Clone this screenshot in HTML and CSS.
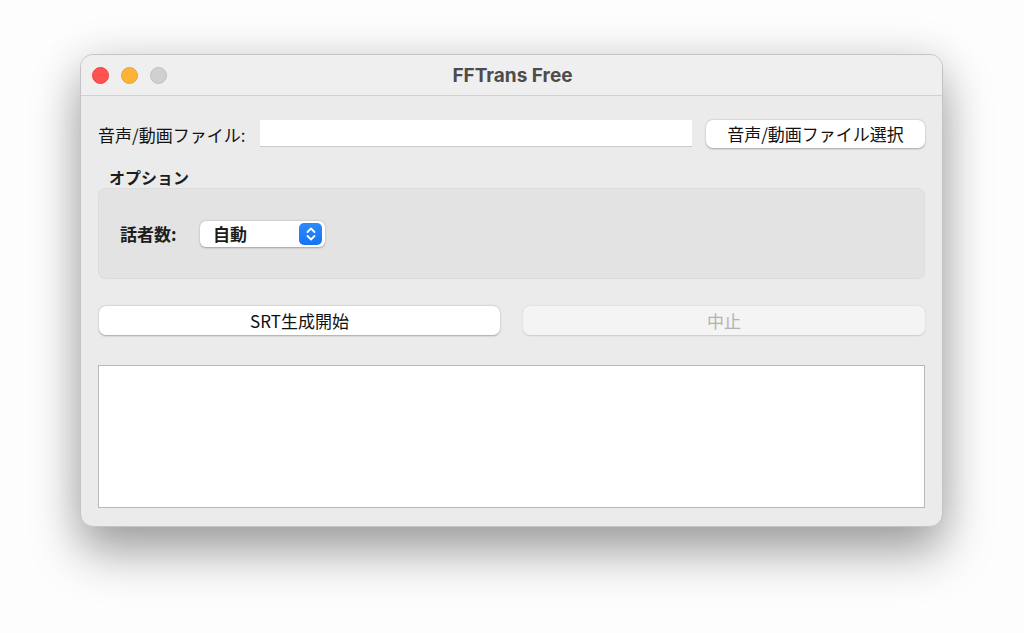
FILE: index.html
```html
<!DOCTYPE html>
<html lang="ja">
<head>
    <meta charset="UTF-8"/>
    <title>FFTrans Free</title>
    <link rel="stylesheet" href="styles.css">
</head>
<body>
<div class="window">
    <header class="titlebar">
        <div class="lights">
            <span class="light close"></span>
            <span class="light minimize"></span>
            <span class="light zoom"></span>
        </div>
        <h1 class="title">FFTrans Free</h1>
    </header>
    <main class="content">
        <div class="file-row">
            <label for="file-path" class="file-label">音声/動画ファイル:</label>
            <input type="text" id="file-path" class="text-field">
            <button class="push-button file-button">音声/動画ファイル選択</button>
        </div>

        <section class="options">
            <h2 class="group-title">オプション</h2>
            <div class="group-box">
                <label class="speaker-label">話者数:</label>
                <div class="popup">
                    <span class="popup-value">自動</span>
                    <span class="stepper">
                        <svg width="12" height="16" viewBox="0 0 12 16">
                            <path d="M2.5 6 L6 2.5 L9.5 6" fill="none" stroke="#fff" stroke-width="1.8" stroke-linecap="round" stroke-linejoin="round"/>
                            <path d="M2.5 10 L6 13.5 L9.5 10" fill="none" stroke="#fff" stroke-width="1.8" stroke-linecap="round" stroke-linejoin="round"/>
                        </svg>
                    </span>
                </div>
            </div>
        </section>

        <div class="action-row">
            <button class="push-button">SRT生成開始</button>
            <button class="push-button disabled" disabled>中止</button>
        </div>

        <div class="log-view"></div>
    </main>
</div>
</body>
</html>
```

FILE: styles.css
```css
html {
    height: 100%;
}

body {
    margin: 0;
    min-height: 100%;
    box-sizing: border-box;
    background-color: #fdfdfd;
    padding: 54px 0 0 80px;
    font-family: Inter, "Noto Sans CJK JP", sans-serif;
    color: #1d1d1d;
}

.window {
    width: 861px;
    height: 471px;
    border: 1px solid #c4c4c4;
    border-radius: 13px;
    background-color: #ebebeb;
    box-shadow: 0 26px 48px rgba(0, 0, 0, 0.34), 0 0 44px rgba(0, 0, 0, 0.1);
    display: flex;
    flex-direction: column;
    overflow: hidden;
}

/* title bar */
.titlebar {
    height: 40px;
    flex: none;
    background-color: #efeff0;
    border-bottom: 1px solid #d2d2d2;
    display: flex;
    align-items: center;
    justify-content: center;
    position: relative;
}

.lights {
    position: absolute;
    left: 11px;
    top: 12px;
    display: flex;
    gap: 12px;
}

.light {
    width: 17px;
    height: 17px;
    border-radius: 50%;
    box-sizing: border-box;
}

.light.close {
    background-color: #fe5350;
    border: 1px solid #e9453f;
}

.light.minimize {
    background-color: #feb336;
    border: 1px solid #e9a22c;
}

.light.zoom {
    background-color: #d0d0d0;
    border: 1px solid #bfbfbf;
}

.title {
    margin: 0;
    font-size: 19px;
    font-weight: 700;
    color: #4c4c4c;
    padding-left: 2px;
}

/* content */
.content {
    padding: 24px 17px 19px 17px;
    display: flex;
    flex-direction: column;
    font-family: "Noto Sans CJK JP", sans-serif;
}

.file-row {
    display: flex;
    align-items: center;
    height: 28px;
}

.file-label {
    font-size: 17px;
    color: #111;
    width: 147px;
    margin-right: 15px;
    white-space: nowrap;
}

.text-field {
    width: 432px;
    height: 27px;
    box-sizing: border-box;
    border: none;
    border-bottom: 1px solid #c9c9c9;
    background-color: #fff;
    margin: 0 14px 1px 0;
    padding: 0 6px;
    outline: none;
}

.push-button {
    font-family: "Noto Sans CJK JP", sans-serif;
    font-size: 17px;
    color: #111;
    background-color: #fff;
    border: none;
    border-radius: 7px;
    box-shadow: 0 0.5px 2px rgba(0, 0, 0, 0.3);
    height: 28px;
    padding: 0;
    line-height: 28px;
    cursor: pointer;
}

.file-button {
    width: 219px;
}

.push-button.disabled {
    background-color: #f3f4f3;
    color: #b2b2b2;
    box-shadow: 0 0.5px 1.5px rgba(0, 0, 0, 0.15);
    cursor: default;
}

/* options group */
.options {
    margin-top: 20px;
}

.group-title {
    margin: 0 0 2px 11px;
    font-size: 16px;
    font-weight: 700;
    line-height: 18px;
}

.group-box {
    height: 91px;
    box-sizing: border-box;
    background-color: #e3e3e3;
    border: 1px solid #dcdcdc;
    border-radius: 7px;
    display: flex;
    align-items: center;
    padding-left: 21px;
}

.speaker-label {
    font-size: 17px;
    font-weight: 700;
    width: 57px;
    margin-right: 23px;
    white-space: nowrap;
}

.popup {
    width: 125px;
    height: 26px;
    box-sizing: border-box;
    background-color: #fff;
    border-radius: 6px;
    box-shadow: 0 0.5px 2px rgba(0, 0, 0, 0.3);
    display: flex;
    align-items: center;
    justify-content: space-between;
    padding: 0 3px 0 13px;
}

.popup-value {
    font-size: 17px;
    font-weight: 700;
}

.stepper {
    width: 23px;
    height: 22px;
    border-radius: 5px;
    background: linear-gradient(#2d89fb, #1474f4);
    display: flex;
    align-items: center;
    justify-content: center;
}

/* actions */
.action-row {
    margin-top: 27px;
    display: grid;
    grid-template-columns: 401px 402px;
    column-gap: 23px;
    padding-left: 1px;
}

.action-row .push-button {
    height: 29px;
    line-height: 29px;
}

.log-view {
    margin-top: 30px;
    height: 143px;
    flex: none;
    box-sizing: border-box;
    background-color: #fff;
    border: 1px solid #b8b8b8;
}
```
